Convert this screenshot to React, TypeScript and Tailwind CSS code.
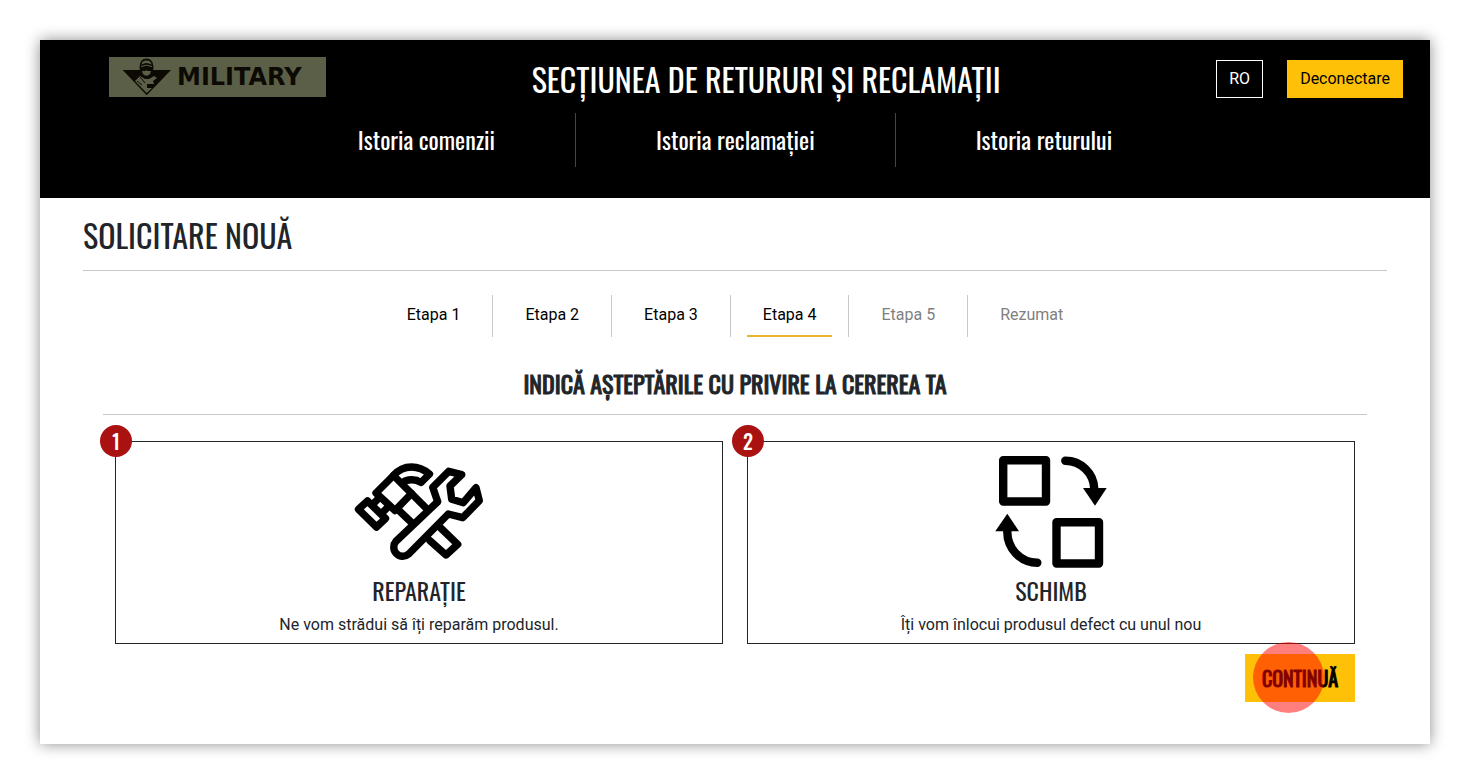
import { clsx } from "clsx";

const navLinks = ["Istoria comenzii", "Istoria reclamației", "Istoria returului"];

const steps = ["Etapa 1", "Etapa 2", "Etapa 3", "Etapa 4", "Etapa 5", "Rezumat"];
const currentStep = 3;

const oswald = "font-['Oswald',sans-serif]";
// regular width, heavier strokes
const oswaldHeavy = "font-['Oswald',sans-serif] [-webkit-text-stroke:1px_currentColor]";

function Logo() {
  return (
    <svg className="h-10 w-[217px]" viewBox="0 0 217 40" role="img" aria-label="Military">
      <rect width="217" height="40" fill="#5b5f47" />
      <path d="M13.7 13H62L37.7 38.3Z" fill="#0d0a04" />
      {/* shoulders */}
      <path d="M31 19L36 22H40L45 19 48 21 44 24 45 27H38V31H43L37.7 36 26 24Z" fill="#5b5f47" />
      <path d="M31 20L36 26M28 24L33 28" fill="none" stroke="#0d0a04" strokeWidth="1" />
      {/* head */}
      <path d="M30.5 10Q31 1.5 37.5 1.5T44.5 10L44 15 41 19.5H34L31 15Z" fill="#0d0a04" />
      <path d="M32.5 7.5Q33 3.5 37.5 3.5T42.500 7.500Q37.5 4.500 32.500 7.500Z" fill="#5b5f47" />
      <path d="M32 9.500Q37.500 7 43 9.500" fill="none" stroke="#5b5f47" strokeWidth="1" />
      <path d="M33 14H36.500L37.500 13 38.500 14H42L41 17 39 18.500H36L34 17Z" fill="#5b5f47" />
      <text
        x="68"
        y="28"
        fill="#0d0a04"
        fontFamily="DejaVu Sans, sans-serif"
        fontWeight="700"
        fontSize="24"
      >
        MILITARY
      </text>
    </svg>
  );
}

function RepairIcon() {
  return (
    <svg
      className="h-[120px] w-40"
      viewBox="-1 0 160 120"
      fill="none"
      stroke="#000"
      strokeWidth="7.4"
      strokeLinejoin="round"
      strokeLinecap="round"
      aria-hidden="true"
    >
      {/* hammer */}
      <path d="M18.5 59.3L27.5 51 45.5 68.5 36.5 77Z" />
      <path d="M34 53L39 48M43 62L48 57" />
      <path d="M36 43L53.5 25.5 71.5 43.5 55 60.5Z" />
      <path d="M53.5 25.5Q61 17 71.500 17 81 17 89.500 24L81 32.500Q74 28 65 31" />
      <path d="M58.5 60L72 73M71.5 43.5L86 58" />
      <path d="M100.7 78L117.7 94.3 106 105 90 90.7" />
      {/* wrench */}
      <path d="M56 91.3L97.7 51.7 92.7 37.3 108.7 21.3 121.7 24.7 110 36 111.7 49.3 123.3 52.7 136 37.7 139.3 50.7 122.7 67.7 108.3 64 68.7 104A9 9 0 0 1 56 91.3Z" />
    </svg>
  );
}

function ExchangeIcon() {
  return (
    <svg
      className="h-[120px] w-[140px]"
      viewBox="1 0 140 120"
      fill="none"
      stroke="#000"
      strokeWidth="8.4"
      strokeLinejoin="round"
      aria-hidden="true"
    >
      <rect x="23.2" y="10.3" width="42.8" height="41.2" />
      <rect x="76.5" y="72.3" width="42.5" height="41.2" />
      <path d="M85.3 10.7A29 29 0 0 1 114.3 39" strokeLinecap="round" />
      <path d="M57.3 112.7A30 31 0 0 1 27.3 81" strokeLinecap="round" />
      <path d="M103 38H126.7L115 55.7Z" fill="#000" stroke="none" />
      <path d="M15.3 81.3H39L27.3 63.7Z" fill="#000" stroke="none" />
    </svg>
  );
}

const options = [
  { title: "REPARAȚIE", text: "Ne vom strădui să îți reparăm produsul.", icon: <RepairIcon /> },
  { title: "SCHIMB", text: "Îți vom înlocui produsul defect cu unul nou", icon: <ExchangeIcon /> },
];

export default function App() {
  return (
    <div className="min-h-screen bg-white p-10 font-['Roboto',sans-serif] text-base text-[#212529]">
      <div className="bg-white pb-[42px] shadow-[0_0_14px_rgba(0,0,0,0.45)]">
        {/* Header */}
        <header className="bg-black pt-4 pb-[31px] text-white">
          <div className="flex h-[57px] items-start pr-[27px] pl-[69px]">
            <a href="#" className="pt-px">
              <Logo />
            </a>
            <h2 className={clsx(oswald, "flex-1 pr-[10px] text-center text-[32px] leading-[46px]")}>
              SECȚIUNEA DE RETURURI ȘI RECLAMAȚII
            </h2>
            <div className="flex gap-6 pt-1">
              <button type="button" className="h-[38px] border border-white px-3">
                RO
              </button>
              <button type="button" className="h-[38px] bg-[#ffc107] px-[13px] text-black">
                Deconectare
              </button>
            </div>
          </div>
          <nav className={clsx(oswald, "flex justify-center divide-x divide-[#444] text-2xl leading-[52px]")}>
            {navLinks.map((label) => (
              <a key={label} href="#" className="px-20 pb-[2px]">
                {label}
              </a>
            ))}
          </nav>
        </header>

        <main className="px-[43px] pt-[14px]">
          <h1 className={clsx(oswald, "border-b border-[#c8c8c8] pb-3 text-[32px] leading-[46px]")}>
            SOLICITARE NOUĂ
          </h1>

          {/* Steps */}
          <ol className="mt-6 flex justify-center divide-x divide-[#c8c8c8]">
            {steps.map((step, i) => (
              <li key={step} className="px-4">
                <a
                  href="#"
                  className={clsx(
                    "block h-[42px] border-b-2 px-4 leading-10",
                    i === currentStep ? "border-[#e9b52f]" : "border-transparent",
                    i > currentStep ? "text-[#7f7f7f]" : "text-black",
                  )}
                >
                  {step}
                </a>
              </li>
            ))}
          </ol>

          <section className="px-5 pt-[22px]">
            <h2
              className={clsx(
                oswaldHeavy,
                "border-b border-[#c8c8c8] pb-[7px] text-center text-2xl leading-[48px]",
              )}
            >
              INDICĂ AȘTEPTĂRILE CU PRIVIRE LA CEREREA TA
            </h2>

            <div className="grid grid-cols-2 gap-6 px-3 pt-[26px]">
              {options.map((option, i) => (
                <button
                  key={option.title}
                  type="button"
                  className="relative flex h-[203px] flex-col items-center border border-[#212529] pt-2"
                >
                  <span
                    className={clsx(
                      oswald,
                      "absolute -top-[17px] -left-4 size-8 rounded-full bg-[#aa1111] text-center text-xl leading-8 font-medium text-white",
                    )}
                  >
                    {i + 1}
                  </span>
                  {option.icon}
                  <span className={clsx(oswald, "mb-[3px] text-2xl leading-10")}>{option.title}</span>
                  <span className="leading-6">{option.text}</span>
                </button>
              ))}
            </div>

            <div className="flex justify-end px-3 pt-[10px]">
              <button
                type="button"
                className={clsx(oswaldHeavy, "relative h-12 w-[110px] bg-[#ffc107] text-xl text-black")}
              >
                CONTINUĂ
                <span className="absolute -top-3 left-2 size-[71px] rounded-full bg-[#ff0000]/50" />
              </button>
            </div>
          </section>
        </main>
      </div>
    </div>
  );
}
